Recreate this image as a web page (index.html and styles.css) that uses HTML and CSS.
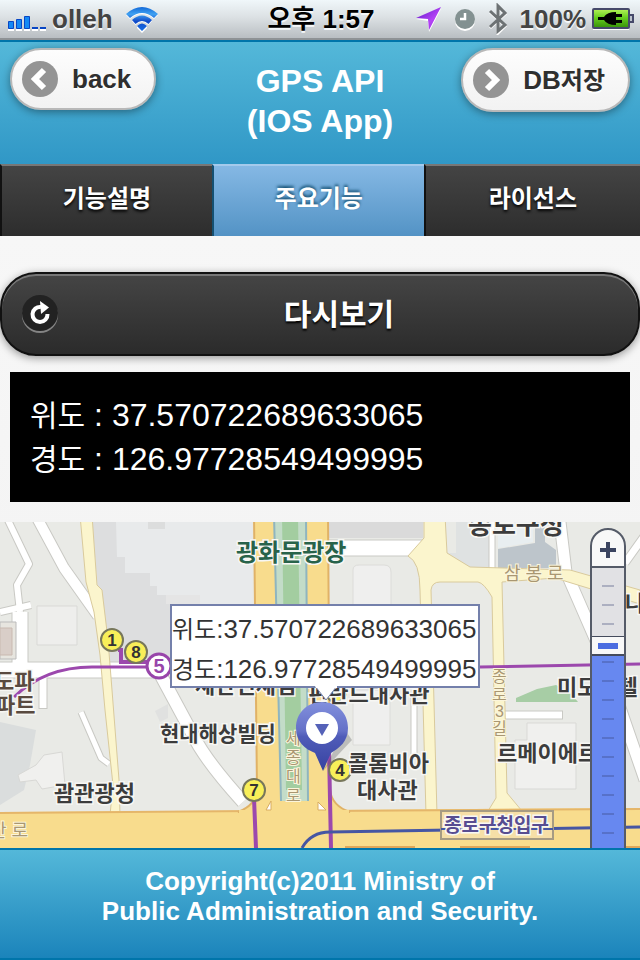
FILE: index.html
```html
<!DOCTYPE html>
<html lang="ko">
<head>
<meta charset="utf-8">
<meta name="viewport" content="width=device-width, initial-scale=1">
<title>GPS API (IOS App)</title>
<link rel="stylesheet" href="styles.css">
</head>
<body>
<div class="status">
  <div class="status-side">
    <svg class="signal" width="40" height="16" viewBox="0 0 40 16" aria-hidden="true">
      <g fill="#fff"><path d="M0 14h6v2H0zM8 14h6v2H8zM16 14h6v2h-6zM24 14h6v2h-6zM32 14h6v2h-6z"/></g>
      <g fill="#1489f5" stroke="#0846c4"><path d="M.5 6.500h5v7h-5zM8.500 4.500h5v9h-5zM16.500 1.500h5v12h-5z"/></g>
      <path d="M24 12h6v2h-6zM32 12h6v2h-6z" fill="#0846c4"/>
    </svg>
    <span>olleh</span>
    <svg class="wifi" width="34" height="28" viewBox="0 0 34 28" aria-hidden="true">
      <defs><linearGradient id="wifi" x2="0" y2="1"><stop stop-color="#1269d8"/><stop offset=".3" stop-color="#41a2f2"/><stop offset=".6" stop-color="#0f49c8"/><stop offset="1" stop-color="#1970e5"/></linearGradient></defs>
      <path d="M1 10Q17-4 33 10L29 14Q17 4 5 14ZM7 16Q17 7 27 16L23.500 20Q17 14 10.500 20ZM12 21Q17 17 22 21V23L17 28L12 23Z" fill="#fff"/>
      <path d="M1 9Q17-5 33 9L29 13Q17 3 5 13ZM7 15Q17 6 27 15L23.500 19Q17 13 10.500 19ZM12 21Q17 16 22 21L17 26Z" fill="url(#wifi)"/>
    </svg>
  </div>
  <div class="clock">오후 1:57</div>
  <div class="status-side status-right">
    <svg width="26" height="26" viewBox="0 0 26 26" aria-hidden="true">
      <defs><linearGradient id="arrow" x1="0" x2="1" y2="1"><stop stop-color="#5a16c8"/><stop offset=".6" stop-color="#b443f5"/><stop offset="1" stop-color="#8a22dd"/></linearGradient></defs>
      <path d="M0 13L25 3L13 26L12 15Z" fill="#fff"/><path d="M0 12L25 1L13 24L12 13Z" fill="url(#arrow)"/>
    </svg>
    <svg class="alarm" width="22" height="24" viewBox="0 0 22 24" aria-hidden="true">
      <circle cx="11" cy="14" r="10" fill="#fff"/><circle cx="11" cy="12" r="10" fill="#839191"/><path d="M11 6V12H6" fill="none" stroke="#fff" stroke-width="2.500"/>
    </svg>
    <svg class="bluetooth" width="20" height="32" viewBox="0 0 20 32" aria-hidden="true">
      <path d="M2 9L17 23L10 30V4L17 11L2 25" fill="none" stroke="#fff" stroke-width="3"/>
      <path d="M2 8L17 22L10 28V3L17 10L2 24" fill="none" stroke="#6d7274" stroke-width="3"/>
    </svg>
    <span>100%</span>
    <svg class="battery" width="42" height="22" viewBox="0 0 42 22" aria-hidden="true">
      <defs><linearGradient id="charge" x2="0" y2="1"><stop stop-color="#b6f25a"/><stop offset=".45" stop-color="#68cf20"/><stop offset="1" stop-color="#358f08"/></linearGradient></defs>
      <path d="M1 21H37" stroke="#fff" stroke-width="2"/>
      <rect x="1" y="1" width="36" height="19" rx="1" fill="url(#charge)" stroke="#46496a" stroke-width="2"/>
      <path d="M38 7h3v7h-3" fill="#bcc3cc" stroke="#46496a" stroke-width="2"/>
      <path d="M6 9H12Q15 4 24 4V6H30V9H24V12H30V15H24V17Q15 17 12 12H6Z" fill="#000"/>
    </svg>
  </div>
</div>

<header class="header">
  <div class="bar">
    <a class="pill" href="#back">
      <svg width="36" height="36" viewBox="0 0 36 36" aria-hidden="true"><circle cx="18" cy="18" r="18" fill="#949494"/><path d="M22 9L13 18L22 27" fill="none" stroke="#fff" stroke-width="6"/></svg>
      <span>back</span>
    </a>
    <h1 class="title">GPS API<br>(IOS App)</h1>
    <button class="pill pill-save" type="button">
      <svg width="36" height="36" viewBox="0 0 36 36" aria-hidden="true"><circle cx="18" cy="18" r="18" fill="#949494"/><path d="M14 9L23 18L14 27" fill="none" stroke="#fff" stroke-width="6"/></svg>
      <span>DB<span class="ko">저장</span></span>
    </button>
  </div>
  <nav class="tabs">
    <a class="tab" href="#guide">기능설명</a>
    <a class="tab tab-active" href="#main">주요기능</a>
    <a class="tab" href="#license">라이선스</a>
  </nav>
</header>

<main class="content">
  <button class="reload" type="button">
    <svg width="36" height="38" viewBox="0 0 36 38" aria-hidden="true">
      <circle cx="18" cy="20" r="18" fill="#858585"/><circle cx="18" cy="18" r="18" fill="#222"/>
      <path d="M19 12A7.500 7.500 0 1 0 25.500 19" fill="none" stroke="#fff" stroke-width="4"/><path d="M18 6L27 12.500L19 19Z" fill="#fff"/>
    </svg>
    <span>다시보기</span>
  </button>
  <div class="coords">
    <p><span class="ko">위도</span> : 37.570722689633065</p>
    <p><span class="ko">경도</span> : 126.97728549499995</p>
  </div>
  <section class="map" aria-label="지도">
    <svg class="map-canvas" viewBox="0 522 640 326" preserveAspectRatio="xMidYMid slice">
      <defs>
        <linearGradient id="pin" x2="0" y2="1"><stop stop-color="#8290dd"/><stop offset=".42" stop-color="#6470c7"/><stop offset=".5" stop-color="#505cb9"/><stop offset="1" stop-color="#3642a0"/></linearGradient>
      </defs>
      <rect y="522" width="640" height="326" fill="#e9eae6"/>
      <!-- blocks and buildings -->
      <path d="M92 522H250V662H110L98 590Z" fill="#dddedf"/>
      <path d="M116 522H252V604H166V595H157V586H150V573H125V557H117Z" fill="#e8eaeb"/>
      <path d="M148 522h17v7h-17z" fill="#dcdddd"/>
      <path d="M166 595H200V604H166Z" fill="#e5e5e5"/>
      <path d="M37 606H77V645H37Z" fill="#eeeeec" stroke="#d9d9d6"/>
      <path d="M0 722L36 730L30 765L24 790L0 805Z" fill="#dadddd"/>
      <path d="M18 775L36 765L44 755L62 752L65 785L42 789L36 780L20 782Z" fill="#f0f0ee" stroke="#d8d8d5"/>
      <path d="M155 711L168 704V718L160 722Z" fill="#e0e1e0"/>
      <path d="M328 522H423V538H328Z" fill="#dadada"/>
      <path d="M353 570Q353 565 359 565H384Q391 565 391 572V690H353Z" fill="#efefee" stroke="#dcdcd9"/>
      <path d="M353 690H390V745H353Z" fill="#efefee" stroke="#dcdcd9"/>
      <path d="M456 522H492V570H448V553H456Z" fill="#dfe2e2"/>
      <path d="M498 549L535 543V522H545V542L556 550V568H498Z" fill="#bdc5cb"/>
      <path d="M498 522H533V542L498 548Z" fill="#e8eef0"/>
      <path d="M527 723H576V789H515V740H527Z" fill="#f0f0ee" stroke="#d9d9d6"/>
      <path d="M516 702V698L537 689L556 685L570 692L578 702Z" fill="#a7cda5"/>
      <!-- minor roads -->
      <g fill="none" stroke="#c9c9c4" stroke-linejoin="round">
        <path d="M6 516L29 564L17 585L20 612" stroke-width="8"/>
        <path d="M36 516L64 568L98 616" stroke-width="12"/>
        <path d="M20 612V670M0 670H160" stroke-width="17"/>
        <path d="M0 612L31 605" stroke-width="8"/>
        <path d="M43 678V709" stroke-width="9"/>
        <path d="M81 712L101 758L109 764" stroke-width="7"/>
        <path d="M158 670L193 735Q205 760 243 802" stroke-width="14"/>
        <path d="M328 548H425" stroke-width="17"/>
        <path d="M414 690V754" stroke-width="7"/>
        <path d="M492 522V570" stroke-width="7"/>
        <path d="M560 522L566 572L600 650L645 780" stroke-width="13"/>
        <path d="M625 563L645 535M505 715H563" stroke-width="9"/>
      </g>
      <g fill="none" stroke="#fff" stroke-linejoin="round">
        <path d="M6 516L29 564L17 585L20 612" stroke-width="6"/>
        <path d="M36 516L64 568L98 616" stroke-width="10"/>
        <path d="M20 612V670M0 670H160" stroke-width="15"/>
        <path d="M0 612L31 605" stroke-width="6"/>
        <path d="M43 674V708" stroke-width="7"/>
        <path d="M81 712L101 758L109 764" stroke-width="5"/>
        <path d="M158 670L193 735Q205 760 243 802" stroke-width="12"/>
        <path d="M326 548H428" stroke-width="15"/>
        <path d="M414 690V754" stroke-width="5"/>
        <path d="M492 522V570" stroke-width="5"/>
        <path d="M560 522L566 572L600 650L645 780" stroke-width="11"/>
        <path d="M625 563L645 535M505 715H562" stroke-width="7"/>
      </g>
      <path d="M0 622H16V659H0Z" fill="#e7e5df" stroke="#bbb"/><path d="M0 628H12V655H0Z" fill="#d9cec8" stroke="#c9b9b0"/>
      <!-- yellow roads -->
      <g fill="#fbf5cd" stroke="#d9ca9c" stroke-width="1">
        <path d="M80 515L86 582L94 612L100 655L105 710L113 785L110 815H120L119 780L112 690L108 640L102 590L97 585L92 515Z"/>
        <path d="M424 515V538L408 556Q420 562 420 590L426 815H437L431 590Q432 582 440 582H478Q484 583 492 597L496 798L488 811H522L507 793L502 582L555 578L640 604V590L570 570L470 567L447 553L445 515Z"/>
      </g>
      <!-- boulevards -->
      <path d="M0 812L640 808V860H0Z" fill="#f8dc8d"/>
      <path d="M0 813L255 811M328 811L640 809" stroke="#e5b66a" stroke-width="2"/>
      <path d="M254 515H328L330 790Q332 806 350 812H238Q256 805 257 790Z" fill="#f8dc8d" stroke="#e0b267" stroke-width="2"/>
      <path d="M239 812H349" stroke="#f8dc8d" stroke-width="4"/>
      <path d="M274 515H306L308 801H281Z" fill="#c3dcc8"/>
      <path d="M274 515L281 801M306 515L308 801" stroke="#8fb5bf" stroke-width="2"/>
      <path d="M282 515H298L302 790H286Z" fill="#a3cda0"/>
      <path d="M266 810L271 801V810ZM318 802L326 810H318Z" fill="#fff" stroke="#d9ad62"/>
      <path d="M345 847H415M460 847H530M590 847H640" stroke="#dfa75a" stroke-width="2"/>
      <!-- subway lines -->
      <g fill="none" stroke="#9c48ad" stroke-width="4">
        <path d="M14 697Q45 667 92 667H160M480 667L640 664" stroke-width="3"/>
        <path d="M118 650H121V662H150"/>
        <path d="M254 798L256 848M329 750L331 848"/>
      </g>
      <path d="M302 848Q311 832 330 832L640 827" fill="none" stroke="#4656a3" stroke-width="3"/>
      <path d="M441 811H553V839H441Z" fill="#f6dfa7" stroke="#a69b83" stroke-width="2"/>
      <path d="M441 829H553" stroke="#4656a3" stroke-width="2"/>
      <!-- numbered exits -->
      <g fill="#f8ef59" stroke="#77775b" stroke-width="2">
        <circle cx="336" cy="692" r="10"/><circle cx="112" cy="640" r="11"/><circle cx="136" cy="652" r="11"/><circle cx="254" cy="790" r="11"/><circle cx="340" cy="770" r="11"/>
      </g>
      <circle cx="159" cy="666" r="12" fill="#fff" stroke="#9845aa" stroke-width="3"/>
      <g class="exit-no"><text x="112" y="646">1</text><text x="136" y="658">8</text><text x="254" y="796">7</text><text x="340" y="776">4</text><text class="line-no" x="159" y="673">5</text></g>
      <!-- place names -->
      <g class="place">
        <text class="park" x="236" y="561">광화문광장</text>
        <text class="office" x="468" y="534">종로구청</text>
        <text class="tower" x="160" y="741">현대해상빌딩</text>
        <text x="195" y="693">세안면세점</text>
        <text x="308" y="702">핀란드대사관</text>
        <text x="348" y="771">콜롬비아</text>
        <text x="357" y="798">대사관</text>
        <text x="54" y="801">괌관광청</text>
        <text x="557" y="695">미모사텔</text>
        <text x="497" y="761">르메이에르</text>
        <text class="brown" x="-6" y="689">도파</text>
        <text class="brown" x="-5" y="713">파트</text>
        <text x="625" y="611">나</text>
        <text class="station" x="444" y="832">종로구청입구</text>
      </g>
      <g class="street">
        <text x="504" y="580">삼 봉 로</text><text x="-10" y="837">안 로</text>
      </g>
      <g class="street street-down">
        <text x="286" y="744">세</text><text x="286" y="763">종</text><text x="286" y="782">대</text><text x="286" y="801">로</text>
        <text x="492" y="682">종</text><text x="492" y="700">로</text><text x="495" y="717">3</text><text x="492" y="734">길</text>
      </g>
      <!-- current position -->
      <path d="M323 771L352 740L345 730Z" fill="#555" opacity=".3"/>
      <path d="M322 702C337 702 348 713 348 728C348 742 339 748 331 753L323 771L315 753C305 749 296 742 296 728C296 713 307 702 322 702Z" fill="url(#pin)"/>
      <circle cx="322" cy="728" r="16" fill="#fff"/><path d="M315 724H329L322 736Z" fill="#5562b8"/>
    </svg>
    <div class="popup">
      <p><span class="ko">위도</span>:37.570722689633065</p>
      <p><span class="ko">경도</span>:126.97728549499995</p>
      <svg class="popup-tail" width="24" height="16" viewBox="0 0 24 16" aria-hidden="true"><path d="M1 0L12 14L23 0" fill="#fff" stroke="#7480ab" stroke-width="1"/><path d="M1 0H23V2H2Z" fill="#fff"/></svg>
    </div>
    <div class="zoom">
      <button class="zoom-in" type="button" aria-label="확대"><svg width="16" height="16" viewBox="0 0 16 16" aria-hidden="true"><path d="M8 0V16M0 8H16" stroke="#3b4460" stroke-width="4"/></svg></button>
      <input class="zoom-level" type="range" min="0" max="100" value="74" aria-label="지도 배율">
    </div>
  </section>
</main>

<footer class="footer">
  <p>Copyright(c)2011 Ministry of<br>Public Administration and Security.</p>
</footer>
</body>
</html>
```
FILE: styles.css
```css
* { box-sizing: border-box; }

body {
  margin: 0;
  min-height: 100vh;
  display: flex;
  flex-direction: column;
  background: #f5f5f5;
  font-family: "Liberation Sans", "Noto Sans CJK KR", sans-serif;
  color: #333;
}

p, h1 { margin: 0; }
svg { display: block; flex: none; }
button { font: inherit; cursor: pointer; }
a { color: inherit; text-decoration: none; }

.status {
  display: grid;
  grid-template-columns: 1fr auto 1fr;
  align-items: center;
  height: 40px;
  padding: 0 6px 0 8px;
  border-bottom: 2px solid #8e9295;
  background: linear-gradient(#f0f7fa, #dce1e4 45%, #b9bec2);
  font-size: 26px;
  font-weight: bold;
  line-height: 38px;
  color: #444;
  text-shadow: 0 2px 0 #f5f8fa;
}

.status-side { display: flex; align-items: center; gap: 4px; }
.status-right { justify-content: flex-end; gap: 12px; }
.signal { margin-top: 8px; }
.wifi { margin-left: 8px; }
.clock { color: #000; }
.battery { margin-left: -6px; }

.header {
  border-top: 2px solid #0075aa;
  background: linear-gradient(#54b8d9, #1b84bb);
}

.bar {
  display: grid;
  grid-template-columns: 1fr auto 1fr;
  align-items: start;
  padding: 6px 10px 23px;
}

.pill {
  display: inline-flex;
  align-items: center;
  gap: 14px;
  justify-self: start;
  height: 62px;
  padding: 0 23px 0 10px;
  border: 2px solid #b8b8b8;
  border-radius: 32px;
  background: linear-gradient(#fdfdfd, #f2f2f2);
  box-shadow: 0 2px 8px rgba(0, 0, 0, .4);
  color: #2f2f2f;
  font-size: 26px;
  font-weight: bold;
  text-shadow: 0 2px 0 #fff;
}

.ko { line-height: 1; }
.pill .ko, .popup .ko { font-size: 24px; }

.pill-save { justify-self: end; height: 64px; }

.title {
  padding-top: 13px;
  color: #fff;
  font-size: 32px;
  line-height: 40px;
  text-align: center;
}

.tabs { display: grid; grid-template-columns: 33.1% 33.1% 1fr; }

.tab {
  height: 72px;
  border-top: 2px solid #777;
  border-left: 2px solid #111;
  background: linear-gradient(#444, #2d2d2d);
  color: #fff;
  font-size: 24px;
  font-weight: bold;
  line-height: 66px;
  text-align: center;
  text-shadow: 0 2px 3px #000;
}

.tab-active {
  border-top-color: #a4caec;
  border-left-color: #145072;
  background: linear-gradient(#85b8e4, #5393c5);
  text-shadow: 0 -2px 3px #145072;
}

.content {
  flex: 1;
  display: flex;
  flex-direction: column;
  padding-top: 36px;
  background: linear-gradient(#f7f7f7, #f1f1f1);
}

.reload {
  display: grid;
  grid-template-columns: 36px 1fr;
  align-items: center;
  height: 84px;
  padding: 0 18px 4px 20px;
  border: 2px solid #111;
  border-radius: 36px;
  background: linear-gradient(#454545, #2b2b2b);
  box-shadow: inset 0 2px 0 #777, 0 2px 8px rgba(0, 0, 0, .4);
  color: #fff;
  font-size: 30px;
  font-weight: bold;
  text-shadow: 0 2px 2px #000;
}

.reload svg { margin-top: 4px; }
.reload span { text-align: center; }

.coords {
  margin: 16px 10px 20px;
  padding: 21px 20px;
  background: #000;
  color: #fff;
  font-size: 32px;
  line-height: 44px;
}

.coords .ko { font-size: 30px; }

.map {
  position: relative;
  flex: 1;
  min-height: 326px;
  overflow: hidden;
}

.map-canvas { position: absolute; inset: 0; width: 100%; height: 100%; }

.place {
  fill: #3c3c3c;
  stroke: #f7f7f4;
  stroke-width: 3px;
  paint-order: stroke;
  font-size: 22px;
  font-weight: bold;
}

.place .park { fill: #28634a; font-size: 24px; }
.place .office { font-size: 26px; }
.place .tower { font-size: 21px; }
.place .brown { fill: #594a3f; }
.place .station { fill: #574d91; font-size: 19px; }

.street {
  fill: #a99772;
  stroke: #fbf5dc;
  stroke-width: 2px;
  paint-order: stroke;
  font-size: 18px;
}

.street-down { font-size: 16px; }

.exit-no { fill: #333; font-size: 17px; font-weight: bold; text-anchor: middle; }
.exit-no .line-no { fill: #9845aa; font-size: 20px; }

.popup {
  position: absolute;
  top: 82px;
  left: calc(50% - 150px);
  width: 310px;
  height: 84px;
  padding-top: 3px;
  border: 2px solid #7480ab;
  background: #fff;
  font-size: 26px;
  line-height: 40px;
  white-space: nowrap;
}

.popup-tail { position: absolute; top: 80px; left: 142px; }

.zoom {
  position: absolute;
  top: 6px;
  right: 14px;
  width: 36px;
}

.zoom-in {
  display: grid;
  place-items: center;
  width: 36px;
  height: 40px;
  padding: 4px 0 0;
  border: 2px solid #555b68;
  border-radius: 18px 18px 0 0;
  background: #f8f8f8;
}

.zoom-level {
  appearance: none;
  writing-mode: vertical-lr;
  direction: rtl;
  display: block;
  width: 36px;
  height: 282px;
  margin: 0;
  border: solid #555b68;
  border-width: 0 2px;
  background:
    repeating-linear-gradient(transparent 0 17px, rgba(50, 60, 110, .3) 17px 19px) center / 12px 100% no-repeat,
    linear-gradient(#e1e1e4 0 78px, #6788f0 78px);
}

.zoom-level::-webkit-slider-runnable-track { width: 32px; height: 282px; }

.zoom-level::-webkit-slider-thumb {
  appearance: none;
  width: 32px;
  height: 20px;
  border: solid #454b5c;
  border-width: 1px 0 2px;
  background: linear-gradient(#4b6ce0, #4b6ce0) center / 20px 6px no-repeat #f8f8f8;
}

.footer {
  height: 112px;
  padding-top: 16px;
  border-top: 2px solid #0075aa;
  border-bottom: 2px solid #0075aa;
  background: linear-gradient(#54b8d9, #1b84bb);
  color: #fff;
  font-size: 26px;
  font-weight: bold;
  line-height: 30px;
  text-align: center;
}
```
